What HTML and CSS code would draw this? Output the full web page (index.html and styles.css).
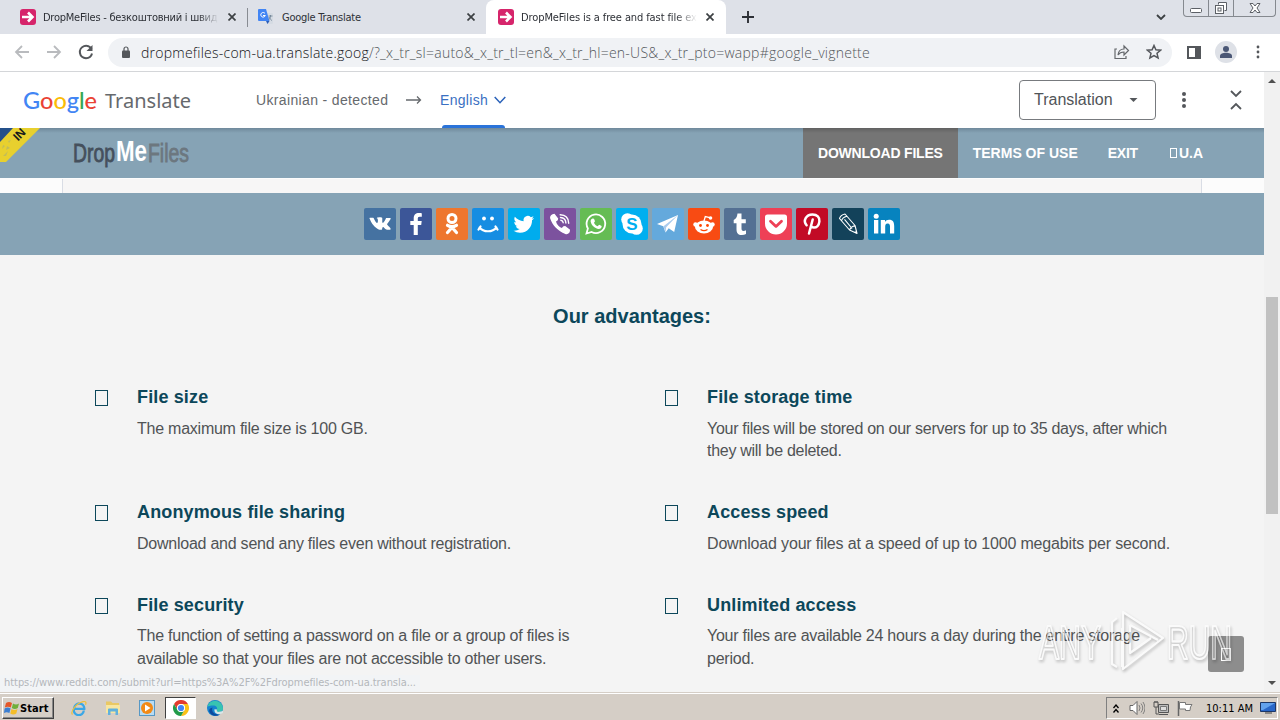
FILE: index.html
```html
<!DOCTYPE html>
<html lang="en">
<head>
  <meta charset="UTF-8">
  <meta name="viewport" content="width=device-width, initial-scale=1.0">
  <title>DropMeFiles is a free and fast file exchange</title>
  <link rel="stylesheet" href="styles.css">
</head>
<body>
  <!-- Tabs -->
  <div class="tab-strip">
    <div class="tab tab-first">
      <svg class="favicon" viewBox="0 0 16 16"><rect width="16" height="16" rx="3" fill="#d6256b"/><path d="M2 8h10M8 3.5L12.500 8 8 12.500" fill="none" stroke="#fff" stroke-width="2.600"/></svg>
      <span class="tab-title title-fade t1">DropMeFiles - безкоштовний і швид</span>
      <svg class="tab-close" viewBox="0 0 8 8"><path d="M.5.5l7 7M7.500.5l-7 7"/></svg>
    </div>
    <div class="tab tab-second">
      <svg class="favicon" viewBox="0 0 16 16"><path d="M6 4h8a1 1 0 011 1v9a1 1 0 01-1 1H9z" fill="#d5dbe3"/><path d="M1 0h7l3.500 12H1a1 1 0 01-1-1V1a1 1 0 011-1z" fill="#4285f4"/><path d="M8 12h3.500L9.500 15z" fill="#2a5db8"/><path d="M7 4.500A2.300 2.300 0 107.300 6.500H5" fill="none" stroke="#fff"/><path d="M10.500 7h4M12.500 6v1c0 2-1 3.500-2 4M11 8c1 2 2 3 3 3.500" fill="none" stroke="#697e91" stroke-width=".8"/></svg>
      <span class="tab-title t2">Google Translate</span>
      <svg class="tab-close" viewBox="0 0 8 8"><path d="M.5.5l7 7M7.500.5l-7 7"/></svg>
    </div>
    <div class="tab tab-active">
      <svg class="favicon" viewBox="0 0 16 16"><rect width="16" height="16" rx="3" fill="#d6256b"/><path d="M2 8h10M8 3.500L12.500 8 8 12.500" fill="none" stroke="#fff" stroke-width="2.600"/></svg>
      <span class="tab-title title-fade">DropMeFiles is a free and fast file ex</span>
      <svg class="tab-close" viewBox="0 0 8 8"><path d="M.5.5l7 7M7.500.5l-7 7"/></svg>
    </div>
    <svg class="new-tab" viewBox="0 0 12 12"><path d="M6 0v12M0 6h12"/></svg>
    <svg class="tab-search" viewBox="0 0 10 6"><path d="M1 1l4 4 4-4"/></svg>
    <div class="window-buttons">
      <span class="win-btn"><svg width="14" height="14" viewBox="0 0 14 14"><rect x="1.500" y="7.500" width="11" height="4" rx="1"/></svg></span>
      <span class="win-btn"><svg width="14" height="14" viewBox="0 0 14 14"><path d="M4.500 3.500v-2h8v8h-2"/><rect x="1.500" y="4.500" width="8" height="8"/><rect x="4" y="7" width="3" height="3"/></svg></span>
      <span class="win-btn win-close"><svg width="14" height="14" viewBox="0 0 14 14"><path d="M2 2.500h3l2 2.500 2-2.500h3L9 7l3 4.500H9L7 9l-2 2.500H2L5 7z"/></svg></span>
    </div>
  </div>

  <!-- Address bar -->
  <div class="toolbar">
    <svg class="nav-icon disabled" viewBox="0 0 16 16"><path d="M15 8H2M8 2L2 8l6 6"/></svg>
    <svg class="nav-icon disabled" viewBox="0 0 16 16"><path d="M1 8h13M8 2l6 6-6 6"/></svg>
    <svg class="nav-icon" viewBox="0 0 16 16"><path d="M13.500 5A6.200 6.200 0 108 14.200a6.200 6.200 0 006-4.700" stroke-width="2"/><path d="M14.500 1v6h-6z" fill="#54575b" stroke="none"/></svg>
    <div class="address">
      <svg class="lock" viewBox="0 0 8 12"><rect y="4.500" width="8" height="7.500" rx="1"/><path d="M2 5V3a2 2 0 014 0v2" fill="none" stroke="#54575b" stroke-width="1.200"/></svg>
      <span class="url"><span class="host">dropmefiles-com-ua.translate.goog</span><span class="path">/?_x_tr_sl=auto&amp;_x_tr_tl=en&amp;_x_tr_hl=en-US&amp;_x_tr_pto=wapp#google_vignette</span></span>
      <svg class="share" viewBox="0 0 16 16"><path d="M3 5H1v9.500h11V12M4 11c.4-4 2.500-6 6-6V2l4.500 4.500L10 11V8c-3 0-4.500.7-6 3z"/></svg>
      <svg class="star" viewBox="0 0 16 16"><path d="M8 1.500l1.900 4.300 4.700.4-3.600 3.100 1.100 4.600L8 11.500l-4.100 2.400L5 9.300 1.400 6.200l4.700-.4z"/></svg>
    </div>
    <svg class="side-panel" viewBox="0 0 14 13"><rect x="1" y="1" width="12" height="11"/><path d="M9 1h4v11H9z" fill="#54575b"/></svg>
    <span class="avatar"><svg viewBox="0 0 14 14"><circle cx="7" cy="4" r="3"/><path d="M1 13v-2c0-2 3-3.200 6-3.200s6 1.200 6 3.200v2z"/></svg></span>
    <svg class="kebab" viewBox="0 0 4 14"><circle cx="2" cy="2" r="1.400"/><circle cx="2" cy="7" r="1.400"/><circle cx="2" cy="12" r="1.400"/></svg>
  </div>

  <div class="window-content">
    <div class="page">
      <!-- Google Translate bar -->
      <div class="translate-bar">
        <div class="google-logo"><span class="google"><span class="g-blue">G</span><span class="g-red">o</span><span class="g-yellow">o</span><span class="g-blue">g</span><span class="g-green">l</span><span class="g-red">e</span></span><span class="product">Translate</span></div>
        <span class="lang-from">Ukrainian - detected</span>
        <svg class="lang-arrow" viewBox="0 0 16 10"><path d="M0 5h14.500M11 1.500L14.500 5 11 8.500"/></svg>
        <div class="lang-to"><span class="lang-name">English</span><svg viewBox="0 0 12 8"><path d="M.7 1L6 6.700 11.300 1"/></svg></div>
        <div class="view-select"><span class="view-name">Translation</span><svg viewBox="0 0 8 4"><path d="M0 0h8L4 4z"/></svg></div>
        <svg class="bar-menu" viewBox="0 0 4 16"><circle cx="2" cy="2" r="2"/><circle cx="2" cy="8" r="2"/><circle cx="2" cy="14" r="2"/></svg>
        <svg class="collapse" viewBox="0 0 12 20"><path d="M1 1l5 5 5-5M1 19l5-5 5 5"/></svg>
      </div>

      <!-- Site header -->
      <div class="site-nav">
        <svg class="ribbon" viewBox="0 0 42 36"><path d="M0 0h20L0 20z" fill="#24508a"/><path d="M13 0h27L6 34H0V14z" fill="#e8d02e"/><path d="M3 17l2 1-3 3zM8 13l3-1-2 3zM10 20l-4 2 1-4zM3 28l5-5-2 5z" fill="#c3bd58"/><text x="0" y="0" transform="translate(18 13.500) rotate(-45)">IN</text></svg>
        <svg class="site-logo" viewBox="0 0 120 30"><text class="logo-drop" x="1" y="24" textLength="42" lengthAdjust="spacingAndGlyphs">Drop</text><text class="logo-me" x="44" y="23" textLength="31" lengthAdjust="spacingAndGlyphs">Me</text><text class="logo-files" x="76" y="24" textLength="41" lengthAdjust="spacingAndGlyphs">Files</text></svg>
        <div class="menu">
          <span class="menu-item current">DOWNLOAD FILES</span>
          <span class="menu-item">TERMS OF USE</span>
          <span class="menu-item exit">EXIT</span>
          <span class="menu-item"><i class="missing-glyph"></i>U.A</span>
        </div>
      </div>
      <div class="upload-edge"><div class="upload-panel"></div></div>

      <!-- Share buttons -->
      <div class="social">
        <svg class="vk" viewBox="0 0 32 32"><path d="M16.300 21.800h1.400s.4 0 .7-.4c.2-.2.2-.7.2-.7s0-2.100 1-2.400c.9-.3 2.200 2 3.500 2.900.9.700 1.700.5 1.700.5l3.300 0s1.800-.1.900-1.500c0-.1-.5-1.200-2.700-3.200-2.300-2.100-2-1.800.8-5.400 1.600-2.200 2.300-3.600 2.100-4.100-.2-.6-1.500-.4-1.500-.4h-3.700s-.3 0-.5.100-.3.400-.3.400-.6 1.600-1.400 2.900c-1.600 2.800-2.300 2.900-2.600 2.700-.6-.4-.5-1.600-.5-2.500 0-2.700.4-3.800-.8-4.100-2.500-.6-4.800-.1-5.700.3-.4.200-.7.600-.5.600.2 0 .8.100 1.100.5.700 1 .8 4.700-.4 5.400-.6.300-1.300-.3-2.900-3-.8-1.400-1.400-2.900-1.400-2.900s-.1-.3-.3-.4c-.3-.2-.6-.2-.6-.2H3.500s-.5 0-.7.200 0 .6 0 .6 2.700 6.400 5.900 9.600c2.900 3 6.200 4.500 7.600 4.500z" transform="translate(3.300 4.300) scale(.8)"/></svg>
        <svg class="fb" viewBox="0 0 32 32"><path d="M17.800 27V17h3.400l.5-3.900h-3.900v-2.500c0-1.100.3-1.900 1.900-1.900h2.100V5.200c-.4-.1-1.600-.2-3-.2-3 0-5.100 1.800-5.100 5.200v2.900h-3.400V17h3.400v10z"/></svg>
        <svg class="ok" viewBox="0 0 32 32"><circle cx="16" cy="10.500" r="4" class="line" stroke-width="3"/><path class="line" stroke-width="3.200" stroke-linecap="round" d="M11.500 17.300q4.500 2.700 9 0M16 19.500l-4.500 5M16 19.500l4.500 5"/></svg>
        <svg class="mail" viewBox="0 0 32 32"><circle cx="12" cy="10.500" r="1.900"/><circle cx="20" cy="10.500" r="1.900"/><path class="line" stroke-width="2.200" stroke-linecap="round" d="M7.500 19.500c4 5 13 5 17 0M6.500 21.500l2-3M25.500 21.500l-2-3"/></svg>
        <svg class="tw" viewBox="0 0 32 32"><path transform="translate(5.500 6) scale(.86)" d="M23.953 4.570a10 10 0 01-2.825.775 4.958 4.958 0 002.163-2.723c-.951.555-2.005.959-3.127 1.184a4.920 4.920 0 00-8.384 4.482C7.690 8.095 4.067 6.130 1.640 3.162a4.822 4.822 0 00-.666 2.475c0 1.710.87 3.213 2.188 4.096a4.904 4.904 0 01-2.228-.616v.06a4.923 4.923 0 003.946 4.827 4.996 4.996 0 01-2.212.085 4.936 4.936 0 004.604 3.417 9.867 9.867 0 01-6.102 2.105c-.39 0-.779-.023-1.170-.067a13.995 13.995 0 007.557 2.209c9.053 0 13.998-7.496 13.998-13.985 0-.21 0-.42-.015-.63A9.935 9.935 0 0024 4.590z"/></svg>
        <svg class="viber" viewBox="0 0 32 32"><path d="M8.500 6.300l2-.5 3.700 4.800-.4 1.700-1.800 1.200c.8 3 3 5.400 5.800 6.600l1.600-1.800 1.800-.2 4.900 3.600-.4 2.200c-1 1.700-2.500 2.700-4.400 2C14 23 8.500 17.500 6.200 10.500c-.5-1.800.5-3.300 2.300-4.200z"/><path class="line" stroke-width="1.400" stroke-linecap="round" d="M16.800 12.200c1.400.2 2.200 1 2.400 2.500M16.500 9.500c3.300.2 5.200 2.100 5.400 5.500M16.200 6.700c5.200.1 8.300 3.100 8.500 8.500"/></svg>
        <svg class="wa" viewBox="0 0 32 32"><path class="line" stroke-width="1.800" d="M6.500 25.500l1.400-5A9.300 9.300 0 1111.600 24z"/><path d="M12.500 10.500l1.500.2 1 2.600-1 1.500c.8 1.700 2 2.800 3.700 3.500l1.400-1.500 2.600 1.300c0 1.900-1.200 2.800-2.900 2.900-4.300-.5-7.700-4-8.200-7.700 0-1.200.7-2.400 1.900-2.800z"/></svg>
        <svg class="skype" viewBox="0 0 32 32"><circle cx="11.500" cy="11.500" r="6.300"/><circle cx="20.500" cy="20.500" r="6.300"/><circle cx="16" cy="16" r="9.500"/><text x="16" y="22" text-anchor="middle" font-size="17" fill="#00aff0">S</text></svg>
        <svg class="tg" viewBox="0 0 32 32"><path d="M26 7L5 16l6.300 2.200 2.200 6.300 3.200-4.200 5.500 3.800z"/><path d="M26 7L11.500 18.200l2 6.200.7-5.200z" fill="#a9cbed"/></svg>
        <svg class="reddit" viewBox="0 0 32 32"><ellipse cx="16" cy="19" rx="9" ry="6.500"/><circle cx="7.500" cy="16.500" r="2.200"/><circle cx="24.500" cy="16.500" r="2.200"/><path class="line" stroke-width="1.300" d="M16 13l1.300-4.500 4.500 1.200"/><circle cx="22.500" cy="10" r="1.800"/><circle cx="12.500" cy="17.500" r="1.400" fill="#ff4500"/><circle cx="19.500" cy="17.500" r="1.400" fill="#ff4500"/><path d="M12.500 21.500q3.500 2.300 7 0" fill="none" stroke="#ff4500" stroke-width="1.300"/></svg>
        <svg class="tumblr" viewBox="0 0 32 32"><path d="M13.500 5.500h4v5.700h4.300v4h-4.300v5c0 2 .5 2.700 2 2.700 1 0 1.800-.2 2.500-.6v3.800c-1.200.6-2.600.9-4.200.9-3.700 0-5.300-2.200-5.300-5.800v-6H9.700v-3.300c2.200-.7 3.400-2.700 3.800-6.400z"/></svg>
        <svg class="pocket" viewBox="0 0 32 32"><path d="M7.500 6.500h17a2.500 2.500 0 012.500 2.500v6.500a11 11 0 01-22 0V9a2.500 2.500 0 012.500-2.500z"/><path d="M10.500 13.200l5.500 5.200 5.500-5.200" fill="none" stroke="#ee4056" stroke-width="2.800" stroke-linecap="round" stroke-linejoin="round"/></svg>
        <svg class="pin" viewBox="0 0 32 32"><path class="line" stroke-width="2.500" stroke-linecap="round" d="M10.600 17.300c-4-4.800-.4-10.800 5.900-10.800 4.600 0 7.300 3 6.900 6.900-.4 4-2.900 6.400-5.600 6.200-1.500-.1-2.600-.9-2.700-2.200M16.700 11.500l-3.700 14"/></svg>
        <svg class="lj" viewBox="0 0 32 32"><path class="line" stroke-width="1.100" stroke-linejoin="round" d="M7.500 10.500q1-3.500 5.500-4.500l10 11.500 2 8-7.500-3.500zM9.500 12.800q1-3.500 5.200-4.600M12.500 11.300l7.600 9.200M17.500 22q1.500-3.500 5.500-4.500M22.500 24.400l2.200-1"/></svg>
        <svg class="linkedin" viewBox="0 0 32 32"><circle cx="8.200" cy="8.200" r="2.500"/><path d="M6 12h4.300v13.500H6zM12.800 12H17v1.900c.8-1.400 2.200-2.200 4-2.200 4.200 0 5.200 2.700 5.200 6.500v7.300H22v-6.600c0-1.600-.1-3.500-2.300-3.500s-2.500 1.700-2.500 3.400v6.700h-4.400z"/></svg>
      </div>

      <div class="advantages">
        <h2>Our advantages:</h2>
        <div class="adv-grid">
          <div class="adv"><i class="missing-glyph"></i><div><h3>File size</h3><p>The maximum file size is 100 GB.</p></div></div>
          <div class="adv"><i class="missing-glyph"></i><div><h3>File storage time</h3><p class="tight">Your files will be stored on our servers for up to 35 days, after which<br>they will be deleted.</p></div></div>
          <div class="adv"><i class="missing-glyph"></i><div><h3>Anonymous file sharing</h3><p>Download and send any files even without registration.</p></div></div>
          <div class="adv"><i class="missing-glyph"></i><div><h3>Access speed</h3><p class="loose">Download your files at a speed of up to 1000 megabits per second.</p></div></div>
          <div class="adv"><i class="missing-glyph"></i><div><h3>File security</h3><p>The function of setting a password on a file or a group of files is<br>available so that your files are not accessible to other users.</p></div></div>
          <div class="adv"><i class="missing-glyph"></i><div><h3>Unlimited access</h3><p>Your files are available 24 hours a day during the entire storage<br>period.</p></div></div>
        </div>
      </div>
      <div class="status">https://www.reddit.com/submit?url=https%3A%2F%2Fdropmefiles-com-ua.transla...</div>
      <div class="to-top"><i class="missing-glyph"></i></div>
      <svg class="watermark" viewBox="0 0 200 70"><text x="1" y="51" textLength="62" lengthAdjust="spacingAndGlyphs">ANY</text><path d="M79 10l-5 4v42l5 3M84 20v39M85 4l40 26-40 31zM92 17v28l21-15M92 17l28 15"/><text x="129" y="51" textLength="65" lengthAdjust="spacingAndGlyphs">RUN</text></svg>
    </div>
    <div class="scrollbar">
      <svg viewBox="0 0 8 4"><path d="M0 4h8L4 0z"/></svg>
      <div class="thumb"></div>
      <svg viewBox="0 0 8 4"><path d="M0 0h8L4 4z"/></svg>
    </div>
  </div>

  <!-- Taskbar -->
  <div class="taskbar">
    <div class="start"><svg viewBox="0 0 16 16"><path d="M2 3q3-2 6 0L6.800 7.500q-3-1.700-6 0z" fill="#e4572a"/><path d="M9 3.500q3 2 6 0L13.800 8q-3 2-6 0z" fill="#6faf3b"/><path d="M.6 8.500q3-2 6 0L5.400 13q-2.800-1.700-5.400 0z" fill="#3b7ed2"/><path d="M7.500 9q3 2 6 0l-1.200 4.500q-3 2-6 0z" fill="#f4bd29"/></svg><b>Start</b></div>
    <span class="task"><svg viewBox="0 0 16 16"><path d="M12.800 10.500A5 5 0 113 8.800h10.300c.2-3-2-5.300-5-5.300A5 5 0 003.200 8" fill="none" stroke="#3aa7e6" stroke-width="2.300"/><path d="M1.500 14.500C-1 12 5 3.500 12 1.700c3-.8 3.500.8 2.500 3" fill="none" stroke="#eebe3a" stroke-width="1.200"/></svg></span>
    <span class="task"><svg viewBox="0 0 16 16"><path d="M1 3V1.500h5L7.500 3H14v9H1z" fill="#e9c864"/><path d="M1 5h14v8H1z" fill="#f8e6a0"/><path d="M3 15V9.500q0-1 1-1h8q1 0 1 1V15h-2.500v-3.500h-5V15z" fill="#61b1dc"/></svg></span>
    <span class="task"><svg viewBox="0 0 16 16"><rect x=".5" y=".5" width="15" height="15" fill="#b8dcf4" stroke="#5798c5"/><circle cx="8" cy="8" r="6" fill="#f28a16"/><path d="M6 4.500v7L11.500 8z" fill="#fff"/></svg></span>
    <span class="task task-active"><svg viewBox="0 0 16 16"><circle cx="8" cy="8" r="8" fill="#fff"/><path d="M1.070 4A8 8 0 0114.930 4H8a4 4 0 00-3.460 6z" fill="#e33b2e"/><path d="M14.930 4A8 8 0 018 16l3.460-6A4 4 0 008 4z" fill="#fbc116"/><path d="M8 16A8 8 0 011.070 4l3.470 6A4 4 0 0011.460 10z" fill="#229b4a"/><circle cx="8" cy="8" r="4" fill="#fff"/><circle cx="8" cy="8" r="3.100" fill="#4285f4"/></svg></span>
    <span class="task"><svg viewBox="0 0 16 16"><circle cx="8" cy="8" r="8" fill="#1683cf"/><path d="M.2 7A8 8 0 0116 8c0 3-2 4-5 4-2 0-2-1-1.200-2C11 7.500 9 5.500 6 5.500 3.500 5.500 1 6 .2 7z" fill="#38c3b1"/><path d="M5.500 7.500C4 11 7 15.500 13 14.200 10 17 5 16 3 13S3 8 5.500 7.500z" fill="#0c4a9e"/><path d="M10 9.500q-1 1.500 1 2.500l5-1v2l-3 1.200c-4 0-6-2-5.500-5z" fill="#d8e6e7"/></svg></span>
    <div class="tray">
      <svg class="tray-up" viewBox="0 0 6 9"><path d="M.5 4L3 1l2.500 3M.5 8.500L3 5.500l2.500 3"/></svg>
      <svg class="tray-sound" viewBox="0 0 16 14"><path d="M1 4.500h3l4-4v13l-4-4H1z" fill="#fff" stroke="#666"/><path d="M10 4q2 3 0 6M12 2.500q3.500 4.500 0 9M14 1q4 6 0 12" fill="none" stroke="#777" stroke-width=".9"/></svg>
      <svg class="tray-net" viewBox="0 0 16 14"><path d="M5.500 3.500h10v8h-10z" fill="#bbb" stroke="#555"/><path d="M7.500 5.500h6v4h-6z" fill="#ddd" stroke="#777"/><path d="M6 13.500h9M1 1h4v5H1zM3 6v7h3M2 0v2M4 0v2" fill="none" stroke="#555"/></svg>
      <svg class="tray-flag" viewBox="0 0 16 15"><path d="M1.500 0v15" stroke="#666" stroke-width="1.500"/><path d="M2.500 1.500h6v2H15q-2 2-2 6H8.500V8h-6z" fill="#fff" stroke="#777"/></svg>
      <span class="clock">10:11 AM</span>
      <svg class="tray-desktop" viewBox="0 0 16 12"><path d="M.5.5h15v9H.5z" fill="#2967c8" stroke="#1c3767"/><path d="M1 1h14L3 8H1z" fill="#62a2ed"/><path d="M5 11h7" stroke="#444"/></svg>
    </div>
  </div>
</body>
</html>
```
FILE: styles.css
```css
* {
  box-sizing: border-box;
}

body {
  margin: 0;
  width: 1280px;
  height: 720px;
  overflow: hidden;
  display: flex;
  flex-direction: column;
  font-family: "Liberation Sans", Arial, sans-serif;
  background: #fff;
}

svg {
  display: block;
  flex: none;
}

/* Tabs */
.tab-strip {
  height: 34px;
  flex: none;
  display: flex;
  align-items: center;
  background: #dee1e8;
  color: #2d3036;
  font-family: "DejaVu Sans Condensed", "DejaVu Sans", sans-serif;
  font-size: 11px;
}

.tab {
  height: 34px;
  display: flex;
  align-items: center;
  flex: none;
}

.tab-first {
  width: 248px;
  padding: 0 12px 0 20px;
  position: relative;
}

.tab-first::after {
  content: "";
  position: absolute;
  right: 0;
  top: 8px;
  width: 1px;
  height: 19px;
  background: #888c92;
}

.tab-second {
  width: 238px;
  padding: 0 11px 0 10px;
}

.tab-active {
  width: 240px;
  padding: 0 12px;
  background: #fff;
  border-radius: 8px 8px 0 0;
}

.favicon {
  width: 16px;
  height: 16px;
  margin-right: 7px;
}

.tab-title {
  flex: 1;
  white-space: nowrap;
  margin-right: 9px;
  letter-spacing: -0.1px;
}

.title-fade {
  -webkit-mask-image: linear-gradient(to right, #000 88%, transparent);
  mask-image: linear-gradient(to right, #000 88%, transparent);
}

.t1 {
  letter-spacing: -0.25px;
}

.t2 {
  padding-left: 1px;
  letter-spacing: -0.25px;
}

.tab-close {
  width: 8px;
  height: 8px;
  stroke: #3c4043;
  stroke-width: 1.7;
}

.new-tab {
  width: 12px;
  height: 12px;
  margin-left: 16px;
  stroke: #2d3036;
  stroke-width: 1.9;
}

.tab-search {
  width: 10px;
  height: 6px;
  margin-left: auto;
  fill: none;
  stroke: #3c4043;
  stroke-width: 1.8;
}

.window-buttons {
  width: 93px;
  height: 17px;
  margin: 0 4px 0 17px;
  align-self: flex-start;
  display: flex;
  border: 1px solid #85898f;
  border-top: 0;
  border-radius: 0 0 4px 4px;
}

.win-btn {
  width: 25px;
  display: flex;
  justify-content: center;
  align-items: center;
  border-right: 1px solid #85898f;
}

.win-btn svg {
  fill: #fff;
  stroke: #5c6066;
}

.win-close {
  width: 41px;
  border: 0;
}

/* Address bar */
.toolbar {
  height: 38px;
  flex: none;
  display: flex;
  align-items: center;
  padding: 0 20px 1px 14px;
  border-bottom: 1px solid #d4d6d9;
}

.nav-icon {
  width: 16px;
  height: 16px;
  margin-right: 16px;
  fill: none;
  stroke: #54575b;
  stroke-width: 1.8;
}

.disabled {
  stroke: #b9bbbe;
}

.address {
  width: 1064px;
  height: 29px;
  margin-left: -2px;
  padding: 0 10px 0 14px;
  display: flex;
  align-items: center;
  border-radius: 15px;
  background: #f0f2f5;
}

.lock {
  width: 8px;
  height: 12px;
  margin-right: 11px;
  fill: #54575b;
}

.url {
  flex: 1;
  white-space: nowrap;
  font-family: "Open Sans", sans-serif;
  font-size: 14px;
  font-weight: 300;
  letter-spacing: 0.24px;
  color: #53575b;
}

.host {
  color: #101114;
}

.share {
  width: 16px;
  height: 16px;
  margin-right: 16px;
  fill: none;
  stroke: #65686c;
  stroke-width: 1.2;
}

.star {
  width: 16px;
  height: 16px;
  fill: none;
  stroke: #54575b;
  stroke-width: 1.5;
}

.side-panel {
  width: 14px;
  height: 13px;
  margin-left: 15px;
  fill: none;
  stroke: #54575b;
  stroke-width: 2;
}

.avatar {
  width: 22px;
  height: 22px;
  margin-left: 14px;
  display: flex;
  align-items: center;
  justify-content: center;
  border-radius: 50%;
  background: #dee1e7;
}

.avatar svg {
  width: 14px;
  fill: #4a5775;
}

.kebab {
  width: 4px;
  height: 14px;
  margin-left: auto;
  fill: #54575b;
}

/* Window content */
.window-content {
  height: 620px;
  flex: none;
  display: flex;
}

.page {
  width: 1264px;
  height: 620px;
  position: relative;
  overflow: hidden;
  background: #f4f4f4;
}

.translate-bar {
  height: 56px;
  display: flex;
  align-items: center;
  padding-left: 24px;
  background: #fff;
  color: #66696d;
}

.google-logo {
  width: 232px;
  display: flex;
  align-items: center;
}

.google {
  width: 82px;
  margin-left: -1px;
  font-family: Lato, sans-serif;
  font-size: 23.5px;
  font-weight: 500;
}

.g-blue { color: #4285f4; }
.g-red { color: #ea4335; }
.g-yellow { color: #fbbc05; }
.g-green { color: #34a853; }

.product {
  font-family: "Noto Sans", sans-serif;
  font-size: 20px;
}

.lang-from {
  width: 150px;
  font-size: 14px;
  letter-spacing: 0.35px;
}

.lang-arrow {
  width: 16px;
  height: 10px;
  fill: none;
  stroke: #66696d;
  stroke-width: 1.3;
}

.lang-to {
  width: 66px;
  height: 56px;
  margin-left: 18px;
  padding-bottom: 1px;
  display: flex;
  align-items: center;
  justify-content: space-between;
  font-size: 14px;
  letter-spacing: 0.3px;
  color: #3a70c2;
  position: relative;
}

.lang-to::after {
  content: "";
  position: absolute;
  left: 2px;
  bottom: 0;
  width: 63px;
  height: 3px;
  border-radius: 3px 3px 0 0;
  background: #2a73d9;
}

.lang-to svg {
  width: 12px;
  height: 8px;
  fill: none;
  stroke: #2a62b9;
  stroke-width: 1.5;
}

.view-select {
  width: 137px;
  height: 40px;
  margin-left: auto;
  padding: 0 17px 0 14px;
  display: flex;
  align-items: center;
  justify-content: space-between;
  border: 1px solid #777a7e;
  border-radius: 4px;
  font-size: 16px;
  color: #515458;
}

.view-select svg {
  width: 9px;
  height: 4px;
  fill: #54575b;
}

.bar-menu {
  width: 4px;
  height: 16px;
  margin-left: 26px;
  fill: #54575b;
}

.collapse {
  width: 12px;
  height: 20px;
  margin: 0 22px 0 44px;
  fill: none;
  stroke: #54575b;
  stroke-width: 1.8;
}

/* Site header */
.site-nav {
  height: 50px;
  display: flex;
  align-items: center;
  background: linear-gradient(#6f899b, #86a3b5 5px);
}

.ribbon {
  width: 42px;
  height: 36px;
  align-self: flex-start;
}

.ribbon text {
  font-size: 12px;
  font-weight: bold;
  fill: #15181c;
}

.site-logo {
  width: 120px;
  height: 30px;
  margin-left: 30px;
  font-family: "Liberation Sans Narrow", "Liberation Sans", sans-serif;
}

.logo-drop {
  font-size: 25px;
  fill: #45505c;
  stroke: #45505c;
  stroke-width: 0.8;
}

.logo-me {
  font-size: 29px;
  font-weight: bold;
  fill: #fff;
}

.logo-files {
  font-size: 25px;
  fill: #6c777f;
  stroke: #6c777f;
  stroke-width: 0.8;
}

.menu {
  display: flex;
  margin: 0 46px 0 auto;
  color: #fff;
  font-size: 14px;
  font-weight: bold;
  line-height: 50px;
}

.menu-item {
  padding: 0 15px;
  white-space: nowrap;
}

.current {
  background: linear-gradient(#616161, #757575 5px);
  letter-spacing: -0.2px;
}

.exit {
  letter-spacing: -0.25px;
}

.missing-glyph {
  display: inline-block;
  flex: none;
  border: 1px solid currentColor;
}

.menu .missing-glyph {
  width: 7px;
  height: 10px;
  margin: 0 2px 0 2px;
}

.upload-edge {
  height: 15px;
  padding: 1px 62px 0;
  background: #fcfcfc;
}

.upload-panel {
  height: 14px;
  background: #f7f6f6;
  border: 1px solid #d9dde5;
  border-width: 0 1px;
}

/* Share buttons */
.social {
  height: 62px;
  display: flex;
  align-items: center;
  justify-content: center;
  gap: 4px;
  background: #86a3b5;
}

.social svg {
  width: 32px;
  height: 32px;
  border-radius: 2px;
  fill: #fff;
  font-weight: bold;
}

.social .line {
  fill: none;
  stroke: #fff;
}

.vk { background: #4572a1; }
.fb { background: #3c5698; }
.ok { background: #ee762e; }
.mail { background: #168de2; }
.tw { background: #00aced; }
.viber { background: #7c529e; }
.wa { background: #65bc54; }
.skype { background: #00aff0; }
.tg { background: #64a9dc; }
.reddit { background: #f84b13; }
.tumblr { background: #547093; }
.pocket { background: #ee4056; }
.pin { background: #c20b26; }
.lj { background: #13425a; }
.linkedin { background: #0783bf; }

/* Advantages */
.advantages {
  padding-top: 49px;
  color: #0c475a;
}

h2 {
  margin: 0;
  text-align: center;
  font-size: 20px;
  line-height: 24px;
}

.adv-grid {
  display: grid;
  grid-template-columns: 570px 570px;
  row-gap: 39.5px;
  padding: 59px 0 0 95px;
}

.adv {
  display: flex;
  gap: 29px;
}

.adv .missing-glyph {
  width: 13px;
  height: 16px;
  margin-top: 3px;
}

h3 {
  margin: 0 0 10.5px;
  font-size: 18px;
  line-height: 20px;
  letter-spacing: 0.14px;
}

p {
  margin: 0;
  font-size: 16px;
  line-height: 22.5px;
  letter-spacing: -0.24px;
  white-space: nowrap;
  color: #505355;
}

.tight {
  letter-spacing: -0.28px;
}

.loose {
  letter-spacing: -0.17px;
}

.status {
  position: absolute;
  left: 0;
  bottom: 0;
  width: 420px;
  height: 17px;
  padding-left: 4px;
  font-family: "DejaVu Sans Condensed", "DejaVu Sans", sans-serif;
  font-size: 11px;
  line-height: 15px;
  letter-spacing: -0.05px;
  white-space: nowrap;
  color: #b4b7bb;
  background: #f2f4f6;
}

.to-top {
  position: absolute;
  left: 1208px;
  top: 564px;
  width: 36px;
  height: 36px;
  display: flex;
  align-items: center;
  justify-content: center;
  border-radius: 3px;
  background: #8d8d8d;
  color: #fff;
}

.to-top .missing-glyph {
  width: 10px;
  height: 13px;
}

.watermark {
  position: absolute;
  left: 1038px;
  top: 536px;
  width: 200px;
  height: 70px;
  font-size: 48px;
  fill: none;
  stroke: #fff;
  stroke-width: 2.2;
  stroke-linejoin: round;
  opacity: 0.6;
  filter: drop-shadow(1px 2px 1.5px rgba(0, 0, 0, 0.4));
}

.scrollbar {
  width: 16px;
  display: flex;
  flex-direction: column;
  align-items: center;
  padding: 7px 0;
  background: #f1f1f1;
}

.scrollbar svg {
  width: 8px;
  height: 4px;
  fill: #505050;
}

.thumb {
  width: 12px;
  height: 217px;
  margin: 214px 0 auto;
  background: #c1c1c1;
}

/* Taskbar */
.taskbar {
  height: 28px;
  flex: none;
  display: flex;
  align-items: center;
  padding: 3px 2px 0 2px;
  background: #d5cec6;
  border-top: 1px solid #d5cec6;
  box-shadow: inset 0 1px #fff;
  font-family: "DejaVu Sans Condensed", "DejaVu Sans", sans-serif;
  font-size: 11px;
  color: #000;
}

.start {
  width: 52px;
  height: 22px;
  padding-left: 1px;
  display: flex;
  align-items: center;
  border: 1px solid;
  border-color: #fff #404040 #404040 #fff;
  box-shadow: inset -1px -1px #888;
}

.start svg {
  width: 16px;
  height: 16px;
}

.start b {
  letter-spacing: 0.1px;
}

.task {
  width: 31px;
  height: 22px;
  margin-left: 3px;
  display: flex;
  align-items: center;
  justify-content: center;
}

.start + .task {
  margin-left: 9px;
}

.task svg {
  width: 16px;
  height: 16px;
}

.task-active {
  background: #fff;
  border: 1px solid;
  border-color: #404040 #fff #fff #404040;
}

.tray {
  width: 172px;
  height: 22px;
  margin-left: auto;
  display: flex;
  align-items: center;
  padding-left: 6px;
  border: 1px solid;
  border-color: #808080 #fff #fff #808080;
}

.tray-up {
  width: 6px;
  height: 9px;
  fill: none;
  stroke: #000;
  stroke-width: 1.3;
}

.tray-sound {
  width: 16px;
  height: 14px;
  margin-left: 10px;
}

.tray-net {
  width: 16px;
  height: 14px;
  margin-left: 8px;
}

.tray-flag {
  width: 16px;
  height: 15px;
  margin-left: 8px;
}

.clock {
  width: 54px;
  margin-left: 13px;
  white-space: nowrap;
}

.tray-desktop {
  width: 16px;
  height: 12px;
}
```
